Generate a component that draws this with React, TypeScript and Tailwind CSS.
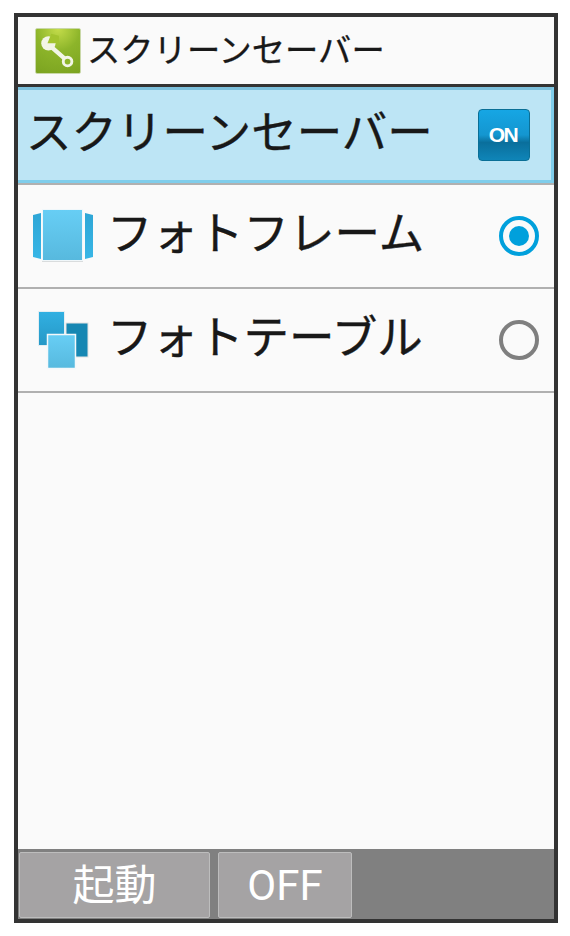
const jp = "font-['Roboto','Noto_Sans_CJK_JP',sans-serif]";

function ToolIcon() {
  return (
    <div className="w-[46px] h-[46px] rounded-[2px] border border-[#c9d8a8] bg-[radial-gradient(circle_at_50%_0%,#c4dc4a_0%,#8db52a_45%,#7ba320_100%)] shrink-0">
      <svg viewBox="0 0 46 46" className="w-full h-full">
        <circle cx="13" cy="15" r="7.500" fill="#f2f5e6" />
        <path d="M12 15 L16 5 L24 7 L24 15 Z" fill="#a3c42f" />
        <path d="M15 18 L30 31" stroke="#f2f5e6" strokeWidth="4.500" strokeLinecap="round" />
        <circle cx="33" cy="34" r="4.500" fill="#8db52a" stroke="#f2f5e6" strokeWidth="3" />
      </svg>
    </div>
  );
}

function FrameIcon() {
  return (
    <svg width="62" height="56" viewBox="0 0 62 56" className="shrink-0">
      <defs>
        <linearGradient id="frameFront" x1="0" y1="0" x2="0" y2="1">
          <stop offset="0" stopColor="#67cef5" />
          <stop offset="1" stopColor="#57b9de" />
        </linearGradient>
        <linearGradient id="frameWing" x1="0" y1="0" x2="0" y2="1">
          <stop offset="0" stopColor="#2ea6d6" />
          <stop offset="1" stopColor="#38b6e6" />
        </linearGradient>
      </defs>
      <path d="M1 7 L9 5 V51 L1 49 Z" fill="url(#frameWing)" />
      <path d="M61 7 L53 5 V51 L61 49 Z" fill="url(#frameWing)" />
      <rect x="10" y="1" width="41" height="53" fill="#d9dcdd" />
      <rect x="10.500" y="1.500" width="40" height="51" fill="url(#frameFront)" stroke="#f0f7fa" />
    </svg>
  );
}

function TableIcon() {
  return (
    <svg width="62" height="64" viewBox="0 0 62 64" className="shrink-0">
      <defs>
        <linearGradient id="tableFront" x1="0" y1="0" x2="0" y2="1">
          <stop offset="0" stopColor="#67cef5" />
          <stop offset="1" stopColor="#57b9de" />
        </linearGradient>
        <linearGradient id="tableBack" x1="0" y1="0" x2="0" y2="1">
          <stop offset="0" stopColor="#31b0e2" />
          <stop offset="1" stopColor="#2698c6" />
        </linearGradient>
      </defs>
      <rect x="34" y="15" width="22" height="34" fill="#1687b3" stroke="#e2e2e2" />
      <rect x="6.500" y="3.500" width="26" height="34" fill="url(#tableBack)" stroke="#e4eef2" />
      <rect x="15.500" y="26.500" width="28" height="34" fill="url(#tableFront)" stroke="#f4f8fa" strokeWidth="1.500" />
    </svg>
  );
}

function Row({ icon, label, selected }: { icon: React.ReactNode; label: string; selected?: boolean }) {
  return (
    <div className="h-[104px] flex items-center border-b-2 border-[#b0b0b0] shrink-0">
      <div className="w-[89px] pl-[14px] shrink-0">{icon}</div>
      <div className="flex-1 text-[45.5px] text-[#181818] leading-none pb-[2px] [-webkit-text-stroke:0.4px_#181818]">{label}</div>
      {selected ? (
        <div className="w-10 h-10 mr-[15px] rounded-full border-[4px] border-[#00a0dc] flex items-center justify-center">
          <div className="w-5 h-5 rounded-full bg-[#00a0dc]" />
        </div>
      ) : (
        <div className="w-10 h-10 mr-[15px] rounded-full border-[4px] border-[#7f7f7f]" />
      )}
    </div>
  );
}

export default function App() {
  return (
    <div className={`w-[570px] h-[936px] bg-white pt-[13px] pl-[14px] ${jp}`}>
      <div className="w-[544px] h-[910px] border-[4px] border-[#333333] bg-[#fafafa] flex flex-col">
        <div className="h-[67px] flex items-center pl-[17px] gap-[6px] shrink-0">
          <ToolIcon />
          <span className="text-[33.3px] text-[#181818] leading-none [-webkit-text-stroke:0.3px_#181818]">スクリーンセーバー</span>
        </div>
        <div className="h-[3px] bg-[#333333] shrink-0" />
        <div className="h-[96px] shrink-0 bg-[#bde5f5] border-t-[3px] border-t-[#7cc0dc] border-r-[3px] border-r-[#7fcdeb] border-b-[3px] border-b-[#7fcdeb] flex items-center justify-between pl-[8px] pr-[21px]">
          <span className="text-[45.5px] text-[#181818] leading-none pb-[2px] [-webkit-text-stroke:0.4px_#181818]">スクリーンセーバー</span>
          <div className="w-[52px] h-[52px] rounded-[4px] border border-[#0a6f96] bg-[linear-gradient(#16a6e4_0%,#1496d0_50%,#0a6f9c_65%,#0f85b8_100%)] flex items-center justify-center text-white text-[21px] font-bold tracking-[-1.5px] font-['Liberation_Sans',sans-serif] pr-[2px]">
            ON
          </div>
        </div>
        <div className="h-[2px] bg-[#b0b0b0] shrink-0" />
        <Row icon={<FrameIcon />} label="フォトフレーム" selected />
        <Row icon={<TableIcon />} label="フォトテーブル" />
        <div className="flex-1" />
        <div className="h-[70px] shrink-0 bg-[#808080] flex items-end pb-[1px] pl-[1px] gap-[8px] text-white text-[42px]">
          <div className="w-[191px] h-[66px] bg-[#a5a3a4] border border-[#bdbdbd] rounded-[2px] flex items-center justify-center">起動</div>
          <div className="w-[134px] h-[66px] bg-[#a5a3a4] border border-[#bdbdbd] rounded-[2px] flex items-center justify-center">OFF</div>
        </div>
      </div>
    </div>
  );
}
